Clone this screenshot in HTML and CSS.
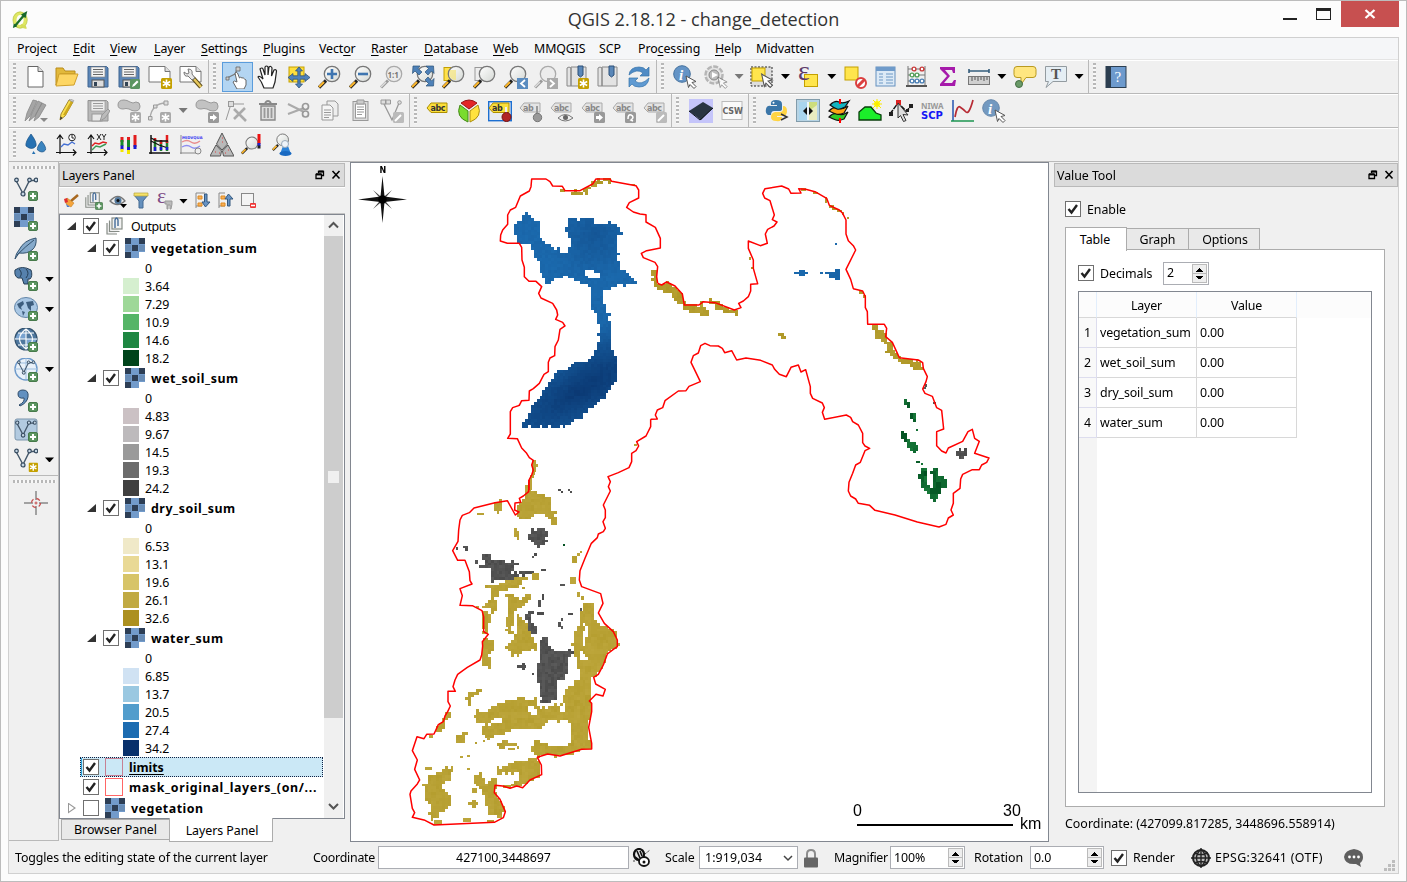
FILE: index.html
```
<!DOCTYPE html>
<html lang="en">
<head>
<meta charset="utf-8">
<title>QGIS 2.18.12 - change_detection</title>
<link rel="stylesheet" href="styles.css">
</head>
<body>
<svg class="sprite" width="0" height="0">
  <defs>
    <linearGradient id="lensG" x1="0" y1="0" x2="1" y2="1"><stop offset="0" stop-color="#fff"/><stop offset="1" stop-color="#d4d8d4"/></linearGradient>
  </defs>
  <symbol id="plus" viewBox="0 0 10 10"><rect x=".5" y=".5" width="9" height="9" rx="1.5" fill="#5b9560" stroke="#477a4b"/><path d="M5 2v6M2 5h6" stroke="#fff" stroke-width="2"/></symbol>
  <symbol id="star" viewBox="0 0 11 11"><rect width="11" height="11" rx="1.5" fill="#c4a000"/><path d="M5.5 1.5v8M1.8 3.5l7.4 4M9.2 3.5l-7.4 4" stroke="#fff" stroke-width="1.6"/></symbol>
  <symbol id="gstar" viewBox="0 0 11 11"><rect width="11" height="11" rx="1.5" fill="#aaa"/><path d="M5.5 1.5v8M1.8 3.5l7.4 4M9.2 3.5l-7.4 4" stroke="#fff" stroke-width="1.6"/></symbol>
  <symbol id="lens" viewBox="0 0 24 24"><path d="M1 22.500l7-7" stroke="#222" stroke-width="3.200"/><path d="M1 22l5-5" stroke="#fcb72c" stroke-width="2.200"/><circle cx="14" cy="9" r="7.700" fill="url(#lensG)" stroke="#777" stroke-width="1.300"/></symbol>
  <symbol id="glens" viewBox="0 0 24 24"><path d="M1 22.500l7-7" stroke="#999" stroke-width="3"/><path d="M1 22l5-5" stroke="#ddd" stroke-width="1.600"/><circle cx="14" cy="9" r="7.700" fill="#ececec" stroke="#aaa" stroke-width="1.300"/></symbol>
  <symbol id="cursor" viewBox="0 0 12 14"><path d="M1 1l10 5.500-4 1 4 4-2 2-4-4-1.500 3z" fill="#fff" stroke="#555" stroke-width="1"/></symbol>
  <symbol id="vee" viewBox="0 0 24 24"><path d="M2 3.500l7 13 6.500-13h6" fill="none" stroke="#43576a" stroke-width="1.400"/><g fill="#c5d6e4" stroke="#34495e" stroke-width="1.200"><circle cx="2.500" cy="3" r="1.800"/><circle cx="9" cy="17" r="2"/><circle cx="15.500" cy="3" r="1.800"/><circle cx="22" cy="3" r="1.800"/></g></symbol>
  <symbol id="raster" viewBox="0 0 20 20"><path fill="#729bcb" d="M0 0h20v14h-6v6H0z"/><path fill="#2d3e55" d="M0 0h6v6H0zM14 0h6v6h-6zM7 7h6v6H7zM0 14h6v6H0z"/><path fill="#56708f" d="M0 7h6v6H0zM14 7h6v6h-6z" opacity=".35"/></symbol>
  <symbol id="pencil" viewBox="0 0 24 24"><path d="M5 21l1-6L14 1l4 2-8 14z" fill="#fbe04d" stroke="#a48a2c"/><path d="M11 16l7-13-2-1-8 14z" fill="#cda91f"/><path d="M5 21l.6-3.500 2 1.500z" fill="#333"/><path d="M14 1l4 2 .8-1.500L15 0z" fill="#ddd" stroke="#888" stroke-width=".6"/></symbol>
  <symbol id="disk" viewBox="0 0 24 24"><path d="M2 1.500h18.500L22 3v19H2z" fill="#5b86b8" stroke="#3f6490"/><rect x="5" y="2" width="14" height="10" fill="#f4f4f4" stroke="#888" stroke-width=".7"/><path d="M7 4.500h10M7 7h10M7 9.500h10" stroke="#666"/><rect x="6" y="15" width="12" height="7" fill="#ddd" stroke="#555"/><rect x="8" y="17" width="3" height="4" fill="#345"/></symbol>
  <symbol id="gdisk" viewBox="0 0 24 24"><path d="M2 1.500h18.500L22 3v19H2z" fill="#b9b9b9" stroke="#929292"/><rect x="5" y="2" width="14" height="10" fill="#ededed" stroke="#999" stroke-width=".7"/><path d="M7 4.500h10M7 7h10M7 9.500h10" stroke="#999"/><rect x="6" y="15" width="10" height="7" fill="#e8e8e8" stroke="#999"/></symbol>
  <symbol id="gtag" viewBox="0 0 24 24"><path d="M1 9l4-5h16v9H5z" fill="#e4e4e4" stroke="#aaa"/></symbol>
  <symbol id="blob" viewBox="0 0 24 24"><path d="M1 6q0-5 6-5 3 0 6 2t6 0q4 0 4 4 0 5-5 5-3 0-6-2-3-1-6 0-5 0-5-4z" fill="#c2c2c2" stroke="#999"/></symbol>
  <symbol id="check" viewBox="0 0 16 16"><rect x=".5" y=".5" width="15" height="15" fill="#fff" stroke="#707070"/><path d="M3.500 8l3 3.500 5.500-7.500" fill="none" stroke="#222" stroke-width="2.400"/></symbol>
  <symbol id="uncheck" viewBox="0 0 16 16"><rect x=".5" y=".5" width="15" height="15" fill="#fff" stroke="#707070"/></symbol>
  <symbol id="folder3" viewBox="0 0 20 20"><g fill="#f2f2f2" stroke="#868c86" stroke-width="1.200"><path d="M2 7v11h10"/><path d="M4.500 4.500v11h10" /><rect x="7" y="2" width="10" height="11"/></g><path d="M10 12V4q1.500-4 3 0v6" fill="none" stroke="#456c99" stroke-width="1.400"/></symbol>
  <symbol id="dock" viewBox="0 0 26 10"><path d="M3.500 3V1.500h5v4H7M1 4.500h5.500v4H1z" fill="none" stroke="#000" stroke-width="1.300"/><path d="M1 4.300h5.500M3.500 1.500h5" stroke="#000" stroke-width="2"/><path d="M17.500 1l7 7.500M24.500 1l-7 7.500" stroke="#000" stroke-width="1.600"/></symbol>
  <symbol id="globe" viewBox="0 0 24 24"><circle cx="12" cy="11" r="11" fill="#4f789f" stroke="#34536f" stroke-width="1.200"/><path d="M4 5h8v6H1zM12 11h11l-4 6h-7z" fill="#79a3d0"/><path d="M4 5h16M1 11h22M4 17h16M12 1v20M12 1q-13 10 0 20 13-10 0-20" fill="none" stroke="#fff" stroke-width="1.100"/></symbol>
</svg>
<div class="window">
  <header class="titlebar">
    <svg class="logo" viewBox="0 0 20 22"><ellipse cx="9" cy="11" rx="6" ry="7.500" fill="none" stroke="#dfe763" stroke-width="4"/><ellipse cx="9" cy="11" rx="8" ry="9" fill="none" stroke="#a9b93b" stroke-width=".6"/><path d="M10 16q3 4 6 3" stroke="#d4dc5a" stroke-width="3" fill="none"/><path d="M3 18L14 5" stroke="#1d6d2a" stroke-width="2.500"/><path d="M10 5l7-4-2 8z" fill="#17672a"/><path d="M1 20l1-5 4 3z" fill="#17672a"/></svg>
    <h1 class="title">QGIS 2.18.12 - change_detection</h1>
    <div class="winbtns"><i class="min"></i><i class="max"></i><span class="close"><svg width="12" height="10" viewBox="0 0 12 10"><path d="M1.500 1l9 8M10.500 1l-9 8" stroke="#fff" stroke-width="2.300"/></svg></span></div>
  </header>
  <div class="frame">
    <nav class="menu"><span>Pro<u>j</u>ect</span><span><u>E</u>dit</span><span><u>V</u>iew</span><span><u>L</u>ayer</span><span><u>S</u>ettings</span><span><u>P</u>lugins</span><span>Vect<u>o</u>r</span><span><u>R</u>aster</span><span><u>D</u>atabase</span><span><u>W</u>eb</span><span>MMQGIS</span><span>SCP</span><span>Pro<u>c</u>essing</span><span><u>H</u>elp</span><span>Midvatten</span></nav>

    <div class="toolbar">
      <div class="group"><i class="grip"></i>
        <b><svg viewBox="0 0 24 24"><path d="M4 1.500h10l5 5V22H4z" fill="#fff" stroke="#666"/><path d="M14 1.500v5h5" fill="#ddd" stroke="#666"/></svg></b>
        <b><svg viewBox="0 0 24 24"><path d="M1 20V3h7l2 3h10v3H5z" fill="#e2b93b" stroke="#b98c1a"/><path d="M1 21l3-12h19l-4 11z" fill="#fdd664" stroke="#d0a02a"/></svg></b>
        <b><svg viewBox="0 0 24 24"><use href="#disk"/></svg></b>
        <b><svg viewBox="0 0 24 24"><use href="#disk"/><rect x="13" y="14" width="10" height="10" rx="1.500" fill="#5b9560"/><path d="M15 22l1-2.500 4-4 1.500 1.500-4 4z" fill="#fff"/></svg></b>
        <b><svg viewBox="0 0 24 24"><path d="M1 1.500h16l5 5V17H1z" fill="#fff" stroke="#777"/><path d="M17 1.500v5h5" fill="#ddd" stroke="#777"/><use href="#star" x="13" y="13" width="11" height="11"/></svg></b>
        <b><svg viewBox="0 0 24 24"><path d="M1 1.500h16l5 5V17H1z" fill="#fff" stroke="#777"/><path d="M17 1.500v5h5" fill="#ddd" stroke="#777"/><path d="M14 13l8 9" stroke="#5a4a18" stroke-width="4.500"/><path d="M15 14l7 8" stroke="#e7c85c" stroke-width="2.500"/><path d="M9 4q5 0 4 5l3 4-3 2-4-4q-4 1-4-4l3 2 2-1z" fill="#e8e8e8" stroke="#777"/></svg></b>
      </div>
      <div class="group"><i class="grip"></i>
        <b class="on"><svg viewBox="0 0 24 24"><path d="M2 13l8-4 3-7" fill="none" stroke="#777" stroke-width="1.200"/><path d="M8 17q1-2 4 0l-2-9q1-1.500 2.500 0l2 5q1-1.500 2.500 0 1-1 2.500 1l1.500 1v5l-2 4h-7z" fill="#fff" stroke="#666" stroke-width="1"/><path d="M11 2h4v4h-4zM1 12h3v3H1z" fill="#ccc" stroke="#666" stroke-width=".8"/></svg></b>
        <b><svg viewBox="0 0 24 24"><path d="M8 23q-2-6-6-11 1-2 5 2L4 4q2-2 3 0l2 6V2q1.500-2 3 0v8l1-8q2-1.500 3 1l-.5 8L18 5q2-1 2.500 1L19 17l-2 6z" fill="#fff" stroke="#222" stroke-width="1.200"/></svg></b>
        <b><svg viewBox="0 0 24 24"><rect x="2" y="2" width="15" height="15" fill="#ffdf3d" stroke="#c4a000"/><path d="M12 2l3.500 4H13.200v4.800H18V8.500l5 4-5 4v-2.300h-4.800V19h2.300L12 23l-3.500-4h2.300v-4.800H6v2.300l-5-4 5-4v2.300h4.800V6H8.500z" fill="#4f82bb" stroke="#264a70" stroke-width=".7"/></svg></b>
        <b><svg viewBox="0 0 24 24"><use href="#lens"/><path d="M14 4v10M9 9h10" stroke="#3e75b0" stroke-width="2.600"/></svg></b>
        <b><svg viewBox="0 0 24 24"><use href="#lens"/><path d="M9 9h10" stroke="#3e75b0" stroke-width="2.600"/></svg></b>
        <b><svg viewBox="0 0 24 24"><use href="#glens"/><text x="7.500" y="12.500" class="t8 bold" fill="#777">1:1</text></svg></b>
        <b><svg viewBox="0 0 24 24"><use href="#lens"/><path d="M2 1h7L7 3.500l4 3.500-3 3-4-4-2.500 2.500zM22.500 1H15l2.500 2.500-3.500 3.500 3 3 3.500-4 2.500 2.500zM22.500 21H15l2.500-2.500-3.500-3.500 3-3 3.500 4 2.500-2.500z" fill="#4d80b7" stroke="#2c5379" stroke-width=".7"/></svg></b>
        <b><svg viewBox="0 0 24 24"><rect x="2" y="2.500" width="12" height="13" fill="#ffe14a" stroke="#c4a000"/><use href="#lens"/><path d="M8 5h6v10q-6 0-7-6z" fill="#f5e477" opacity=".7"/></svg></b>
        <b><svg viewBox="0 0 24 24"><rect x="2" y="2.500" width="12" height="13" fill="#eee" stroke="#999"/><use href="#lens"/></svg></b>
        <b><svg viewBox="0 0 24 24"><use href="#lens"/><rect x="13" y="13" width="11" height="11" fill="#5a8cc0"/><path d="M21 15l-4 3.500 4 3.500" fill="none" stroke="#fff" stroke-width="1.800"/></svg></b>
        <b><svg viewBox="0 0 24 24"><use href="#glens"/><rect x="13" y="13" width="11" height="11" fill="#aaa"/><path d="M16 15l4 3.500-4 3.500" fill="none" stroke="#fff" stroke-width="1.800"/></svg></b>
        <b><svg viewBox="0 0 24 24"><path d="M2 3q2-2 4 0v18H2zM6 2h15v19H6z" fill="#e3e3e3" stroke="#888"/><path d="M13 1h5v9l-2.500 2L13 10z" fill="#5a87b8" stroke="#2d5079"/><use href="#star" x="13" y="13" width="11" height="11"/></svg></b>
        <b><svg viewBox="0 0 24 24"><path d="M2 3q2-2 4 0v18H2zM6 2h15v19H6z" fill="#e3e3e3" stroke="#888"/><path d="M13 1h5v9l-2.500 2L13 10z" fill="#5a87b8" stroke="#2d5079"/></svg></b>
        <b><svg viewBox="0 0 24 24"><path d="M2 10q1-8 10-8 5 0 7 3l3-3v9h-9l3-3q-6-5-14 2z" fill="#4f8bc5" stroke="#3572ab" stroke-width=".7"/><path d="M22 13q-1 9-10 9-5 0-7-3l-3 3v-9h9l-3 3q6 5 14-3z" fill="#5f9ad2" stroke="#3572ab" stroke-width=".7"/></svg></b>
      </div>
      <div class="group"><i class="grip"></i>
        <b><svg viewBox="0 0 24 24"><circle cx="9" cy="9" r="8.300" fill="#6494c6" stroke="#44719e"/><text x="6" y="14.500" class="serif" fill="#fff">i</text><use href="#cursor" x="12" y="10" width="12" height="14"/></svg></b>
        <b><svg viewBox="0 0 24 24"><circle cx="10" cy="10" r="8.500" fill="#e4e4e4" stroke="#b5b5b5" stroke-width="2.500" stroke-dasharray="5 1.500"/><circle cx="10" cy="10" r="5" fill="#bcbcbc" stroke="#888"/><path d="M8 7l6 3-6 3z" fill="#fff"/><g opacity=".6"><use href="#cursor" x="13" y="11" width="11" height="13"/></g></svg></b><em class="dim"></em>
        <b><svg viewBox="0 0 24 24"><rect x="1" y="2" width="21" height="19" fill="#ddd" stroke="#222" stroke-dasharray="2 1.500"/><rect x="2" y="3" width="13" height="13" fill="#ffe54d" stroke="#c4a000"/><use href="#cursor" x="10" y="8" width="14" height="15"/></svg></b><em></em>
        <b><svg viewBox="0 0 24 24"><rect x="7.500" y="9.500" width="13" height="12" fill="#ffe54d" stroke="#c4a000"/><text x="1" y="14.500" class="eps" fill="#5d3b6a">ε</text></svg></b><em></em>
        <b><svg viewBox="0 0 24 24"><rect x="2" y="2" width="13" height="13" fill="#ffe54d" stroke="#c4a000"/><circle cx="18" cy="18" r="5" fill="#fff" stroke="#db3f3f" stroke-width="2"/><path d="M14.500 21.500l7-7" stroke="#db3f3f" stroke-width="3"/></svg></b>
        <b><svg viewBox="0 0 24 24"><rect x="2" y="2" width="19" height="19" fill="#ddeaf6" stroke="#6490be"/><path d="M2 2h19v4H2z" fill="#6f9bca"/><path d="M5 9h4M12 9h7M5 12h4M12 12h7M5 15h4M12 15h7M5 18h4M12 18h7" stroke="#6d98c4"/></svg></b>
        <b><svg viewBox="0 0 24 24"><path d="M3 1v20M20 1v20M3 4h17M3 10h17M3 16h17" stroke="#777" fill="none"/><path d="M1 21h21" stroke="#555" stroke-width="2"/><g stroke-width="1.400" fill="#fff"><g stroke="#c93b3b"><circle cx="9" cy="4" r="1.900"/><circle cx="17" cy="4" r="1.900"/></g><g stroke="#55a05b"><circle cx="7" cy="10" r="1.900"/><circle cx="12" cy="10" r="1.900"/></g><g stroke="#4c80b5"><circle cx="7" cy="16" r="1.900"/><circle cx="12" cy="16" r="1.900"/><circle cx="17" cy="16" r="1.900"/></g></g></svg></b>
        <b><svg viewBox="0 0 24 24"><path d="M4 2h15v6h-2l-1-3H9l5 6-6 7h8l2-3h2l-1 6H4v-2l7-8-7-7z" fill="#a61bab"/></svg></b>
        <b><svg viewBox="0 0 24 24"><path d="M2 6h20M2 4v4M22 4v4" stroke="#355d7c" stroke-width="1.600"/><rect x="1.500" y="11.500" width="21" height="8" fill="#d0d0d0" stroke="#777"/><path d="M5 12v4M8 12v3M11 12v4M14 12v3M17 12v4M20 12v3" stroke="#555"/></svg></b><em></em>
        <b><svg viewBox="0 0 24 24"><path d="M4 1.500h16q3 0 3 3v5q0 3-3 3h-7l-5 7V12.500H4q-3 0-3-3v-5q0-3 3-3z" fill="#ffe680" stroke="#b99a20"/><circle cx="6" cy="19" r="3.500" fill="#6a9a68" stroke="#456f45"/></svg></b>
        <b><svg viewBox="0 0 24 24"><path d="M1.500 1.500h21v15H9l-7 6 2.500-6h-3z" fill="#e5eef4" stroke="#939ba0"/><text x="7" y="14" class="tt" fill="#555">T</text></svg></b><em></em>
      </div>
      <div class="group last"><i class="grip"></i>
        <b class="help"><svg viewBox="0 0 24 24"><rect x="2" y="1.500" width="20" height="21" fill="#6d9acd" stroke="#2c3e50"/><path d="M2 1h5v22H2z" fill="#2c3e50"/><text x="10.500" y="17" class="q" fill="#fff">?</text></svg></b>
      </div>
    </div>

    <div class="toolbar">
      <div class="group"><i class="grip"></i>
        <b><svg viewBox="0 0 24 24"><path d="M1 22l2-8L9 1l4 1-7 15zM5 22l3-8 6-12 4 2-7 13zM10 22l2-7 6-11 4 2-7 12z" fill="#a5a5a5" stroke="#888" stroke-width=".8"/><path d="M16 19h8l-4 4z" fill="#888"/></svg></b>
        <b><svg viewBox="0 0 24 24"><use href="#pencil"/></svg></b>
        <b><svg viewBox="0 0 24 24"><use href="#gdisk"/><path d="M14 22l2-6 6-6 2 2-5 7z" fill="#bbb" stroke="#999"/></svg></b>
        <b><svg viewBox="0 0 24 24"><use href="#blob"/><use href="#gstar" x="13" y="13" width="11" height="11"/></svg></b>
        <b><svg viewBox="0 0 24 24"><path d="M2 19Q4 4 18 4" fill="none" stroke="#aaa" stroke-width="1.300"/><path d="M.5 17.500h3.500V21H.500zM5.500 6H9v3H5.500zM16 2h4v4h-4z" fill="#ddd" stroke="#999"/><use href="#gstar" x="12" y="13" width="11" height="11"/></svg></b><em class="dim"></em>
        <b><svg viewBox="0 0 24 24"><use href="#blob"/><rect x="13" y="13" width="11" height="11" rx="1.500" fill="#999"/><path d="M15 17h3v-2l4 3.500-4 3.500v-2h-3z" fill="#fff"/></svg></b>
        <b><svg viewBox="0 0 24 24"><path d="M1 21L6 5h13" fill="none" stroke="#999"/><rect x="3.500" y="2.500" width="5" height="5" fill="#ddd" stroke="#999"/><path d="M9 10l12 12M20 9L9 20" stroke="#aaa" stroke-width="2.600"/></svg></b>
        <b><svg viewBox="0 0 24 24"><path d="M5 7h14v14H5z" fill="#ddd" stroke="#888" stroke-width="1.400"/><path d="M3 5h18M9 4q3-4 6 0" fill="none" stroke="#888" stroke-width="1.800"/><path d="M8.500 9v10M12 9v10M15.500 9v10" stroke="#999" stroke-width="1.800"/></svg></b>
        <b><svg viewBox="0 0 24 24"><path d="M1 5l16 8M1 15l16-6" stroke="#aaa" stroke-width="2"/><circle cx="18.500" cy="7.500" r="3" fill="none" stroke="#999" stroke-width="1.700"/><circle cx="18.500" cy="15" r="3" fill="none" stroke="#999" stroke-width="1.700"/></svg></b>
        <b><svg viewBox="0 0 24 24"><path d="M9 2h8l3 3v12H9z" fill="#eee" stroke="#999"/><path d="M4 6h8l3 3v12H4z" fill="#f6f6f6" stroke="#999"/><path d="M6 11h7M6 13.500h7M6 16h7M6 18.500h5" stroke="#999"/></svg></b>
        <b><svg viewBox="0 0 24 24"><rect x="4" y="2.500" width="15" height="19" fill="#ddd" stroke="#999"/><rect x="6.500" y="5" width="10" height="14" fill="#fff" stroke="#999"/><path d="M8 1h7v4H8z" fill="#ccc" stroke="#999"/><path d="M8 8h7M8 10.500h7M8 13h7M8 15.500h5" stroke="#999"/></svg></b>
        <b><svg viewBox="0 0 24 24"><path d="M1 1h5v4H1zM5.500 1h5v4h-5z" fill="#ddd" stroke="#999"/><path d="M4 5l8 16 7-17" fill="none" stroke="#999" stroke-width="1.300"/><circle cx="19.500" cy="3.500" r="1.800" fill="#ddd" stroke="#999"/><rect x="13" y="13" width="11" height="11" rx="1.500" fill="#bbb"/><path d="M15 22l6-6" stroke="#fff" stroke-width="2"/></svg></b>
      </div>
      <div class="group"><i class="grip"></i>
        <b><svg viewBox="0 0 24 24"><path d="M1 9l4-5h16v9.500H5z" fill="#fbdf3a" stroke="#ad8f00"/><text x="4.500" y="12" class="abc" fill="#333">abc</text></svg></b>
        <b><svg viewBox="0 0 24 24"><path d="M12 10L4 4q8-6 16 0z" fill="#e32626" stroke="#9a1515"/><path d="M11 12L3 6q-5 12 8 17z" fill="#79dc2e" stroke="#46891a"/><path d="M13 12l8-6q5 12-8 17z" fill="#ffe23d" stroke="#ab8e12"/></svg></b>
        <b><svg viewBox="0 0 24 24"><rect x=".7" y="2.700" width="22.600" height="19" fill="#e8eaf0" stroke="#1c6fd1" stroke-width="1.400"/><path d="M1 9l4-5h16v9.500H5z" fill="#fbdf3a" stroke="#ad8f00"/><text x="4" y="12" class="abc" fill="#333">ab</text><path d="M18 8v9" stroke="#eee" stroke-width="2"/><circle cx="18.500" cy="18" r="4.500" fill="#b12525" stroke="#771010"/></svg></b>
        <b><svg viewBox="0 0 24 24"><use href="#gtag"/><text x="4" y="12" class="abc" fill="#888">ab</text><path d="M18 7v9" stroke="#999" stroke-width="2"/><circle cx="18.500" cy="18.500" r="4.200" fill="#999" stroke="#777"/></svg></b>
        <b><svg viewBox="0 0 24 24"><use href="#gtag"/><text x="4" y="12" class="abc" fill="#888">abc</text><path d="M8 19q7-7 15 0-8 6-15 0z" fill="#eee" stroke="#777"/><circle cx="15.500" cy="18.500" r="2.500" fill="#666"/></svg></b>
        <b><svg viewBox="0 0 24 24"><use href="#gtag"/><text x="4" y="12" class="abc" fill="#888">abc</text><rect x="13" y="13" width="11" height="11" rx="1.500" fill="#999"/><path d="M15 17h3v-2l4 3.500-4 3.500v-2h-3z" fill="#fff"/></svg></b>
        <b><svg viewBox="0 0 24 24"><use href="#gtag"/><text x="4" y="12" class="abc" fill="#888">abc</text><rect x="13" y="13" width="11" height="11" rx="1.500" fill="#999"/><path d="M16 20q0-5 3-4 4 2 0 5l2 1" fill="none" stroke="#fff" stroke-width="1.500"/></svg></b>
        <b><svg viewBox="0 0 24 24"><use href="#gtag"/><text x="4" y="12" class="abc" fill="#888">abc</text><rect x="13" y="13" width="11" height="11" rx="1.500" fill="#bbb"/><path d="M15 22l6-6" stroke="#fff" stroke-width="2"/></svg></b>
      </div>
      <div class="group"><i class="grip"></i>
        <b><svg viewBox="0 0 24 24"><rect width="24" height="24" fill="#c5c5fa"/><path d="M0 12L14 3l10 6-12 12z" fill="#293541"/><path d="M0 12l11 9 13-12" fill="none" stroke="#10171d"/></svg></b>
        <b><svg viewBox="0 0 24 24"><rect x="2" y="2.500" width="20" height="18" fill="#fafafa" stroke="#bbb"/><text x="2.500" y="14.500" class="csw" fill="#666">CSW</text></svg></b>
      </div>
      <div class="group last"><i class="grip"></i>
        <b><svg viewBox="0 0 24 24"><path d="M11 1q6 0 6 4v5q0 2-3 2H9q-3 0-3 4H3q-3-2-2-6t5-3h6V6H6q-1-5 5-5z" fill="#3b76a8"/><path d="M18 7q4 0 4 5t-4 5h-6v1h5q0 5-6 4-5 0-5-4 0-4 4-5h5q3 0 3-3z" fill="#ffd443"/><circle cx="8.500" cy="3.800" r="1" fill="#fff"/><path d="M16 15l6 3-6 3" fill="none" stroke="#333" stroke-width="1.500"/></svg></b>
        <b><svg viewBox="0 0 24 24"><rect x=".5" y=".5" width="23" height="22" fill="#b7d4e5" stroke="#829cab"/><path d="M13 3h8v18h-8z" fill="#cddd7c"/><path d="M13 21V12l8-6v15z" fill="#e8ecc0"/><path d="M3 3h8v18H3z" fill="#a9d5ee"/><path d="M12 3v18" stroke="#fff" stroke-width="1.500"/><path d="M11 8v8l-4-4zM13 8v8l4-4z" fill="#111"/></svg></b>
        <b><svg viewBox="0 0 24 24"><g stroke="#111" stroke-width="1.200"><path d="M2 18q5-5 9-3t10-2l-4 7q-5 2-8 1t-7-3z" fill="#35c928"/><path d="M2 12q5-5 9-3t10-2l-4 7q-5 2-8 1t-7-3z" fill="#ffa514"/><path d="M3 6q5-5 9-3t10-1l-4 6q-5 3-8 2t-7-4z" fill="#14b4c0"/></g><path d="M13 0v5M13 19v5" stroke="#f00" stroke-width="2"/></svg></b>
        <b><svg viewBox="0 0 24 24"><path d="M1 21v-8l6-5h6l5 6 5 2v5z" fill="#1bef2a" stroke="#093c0b" stroke-width="1.300"/><circle cx="19" cy="5" r="3" fill="#ff0"/><path d="M19 0v10M14 5h10M15 1l8 8M23 1l-8 8" stroke="#fae900"/></svg></b>
        <b><svg viewBox="0 0 24 24"><path d="M1 15l8-11 8 8 6-5" fill="none" stroke="#111" stroke-width="1.500" stroke-dasharray="5 1"/><path d="M0 13h4v4H0zM17 10h3v3h-3zM20 5h4v4h-4z" fill="#222"/><path d="M7 1h5v5H7z" fill="#d22"/><path d="M9 4l10 12-5-.5 3 6-2.500 1-3-6L9 19z" fill="#ddd" stroke="#333"/></svg></b>
        <b><svg viewBox="0 0 24 24"><text x="1" y="9.500" class="niwa" fill="#999">NIWA</text><text x="1" y="19.500" class="scp" fill="#1515f5">SCP</text></svg></b>
        <b><svg viewBox="0 0 24 24"><path d="M2 1v21" stroke="#2654b0" stroke-width="1.500"/><path d="M0 22h23" stroke="#1d9651" stroke-width="1.500"/><path d="M4 18Q6 6 9 8t6 5 7-12" fill="none" stroke="#b72b34" stroke-width="1.700"/></svg></b>
        <b><svg viewBox="0 0 24 24"><circle cx="9" cy="9" r="8.300" fill="#7399c0" stroke="#6688ab"/><text x="6" y="14.500" class="serif" fill="#fff">i</text><use href="#cursor" x="12" y="10" width="12" height="14"/></svg></b>
      </div>
    </div>

    <div class="toolbar">
      <div class="group last"><i class="grip"></i>
        <b><svg viewBox="0 0 24 24"><path d="M7 1q6 8 5 12-4 5-10 0Q1 9 7 1z" fill="#2671b2" stroke="#1a5286" stroke-width=".7"/><path d="M17.500 8q5 6 4 9-3 4-8 0-1-3 4-9z" fill="#3b84bf" stroke="#1a5286" stroke-width=".7"/><path d="M8 21l1.500-3 2 3z" fill="#2671b2"/></svg></b>
        <b><svg viewBox="0 0 24 24"><path d="M5 2v19M1 19.500h20M2 6l3-4 3 4M18 16.500l3 3-3 3" fill="none" stroke="#111" stroke-width="1.200"/><path d="M6 14l3-3 4 1 4-3 3 2" fill="none" stroke="#4470d4" stroke-width="1.300"/><circle cx="17" cy="4.500" r="3.300" fill="#fff" stroke="#222"/><path d="M17 2v3h2" fill="none" stroke="#222"/></svg></b>
        <b><svg viewBox="0 0 24 24"><path d="M5 2v19M1 19.500h20M2 6l3-4 3 4M18 16.500l3 3-3 3" fill="none" stroke="#111" stroke-width="1.200"/><path d="M6 13l3-3 4 1 4-2 4 1" fill="none" stroke="#e02323" stroke-width="1.500"/><path d="M6 17l4-4 4 1 6-3" fill="none" stroke="#3c9b55" stroke-width="1.400"/><path d="M11 1l4 6M15 1l-4 6M16 1l2 3 2-3M18 4v3" stroke="#222" fill="none"/></svg></b>
        <b><svg viewBox="0 0 24 24"><path d="M5 4v5M11.500 4v5M18 2v12" stroke="#e21d1d" stroke-width="3"/><path d="M5 7v6M11.500 7v7" stroke="#168b2b" stroke-width="3"/><path d="M5 12.500v4M11.500 14v4M18 12v4" stroke="#1a1ad0" stroke-width="3"/><path d="M5 16v3M11.500 17v4" stroke="#f3e600" stroke-width="3"/></svg></b>
        <b><svg viewBox="0 0 24 24"><path d="M3 2v19M1 20h21" stroke="#111" stroke-width="1.500"/><path d="M7 6v12M13 8v10M19 8v10" stroke="#227f30" stroke-width="2.500"/><path d="M7 5v3M19 2v8M13 7v4" stroke="#e21d1d" stroke-width="2.500"/><path d="M3 5l6 3 11 0M3 8l8 4 9 3" fill="none" stroke="#111" stroke-width="1.300"/><path d="M7 14v4M13 14v3M19 14v3" stroke="#1a1ad0" stroke-width="2.500"/></svg></b>
        <b><svg viewBox="0 0 24 24"><path d="M2 2v19M1 20h16" stroke="#888"/><text x="3" y="5.500" class="mid" fill="#3838f0">MIDVQUAL</text><path d="M3 9q5-3 9 0t9-1" fill="none" stroke="#e98b8b" stroke-width="1.300"/><path d="M3 14q5-3 9 0t9-1" fill="none" stroke="#8d8df0" stroke-width="1.300"/><circle cx="19" cy="18" r="3" fill="#eee" stroke="#888"/></svg></b>
        <b><svg viewBox="0 0 24 24"><g fill="#b9b9b9" stroke="#555" stroke-width="1"><path d="M12 0L6.500 11l5.500 6 5.500-6z"/><path d="M6 12l5.500 6-1 5H0z"/><path d="M18 12l-5.500 6 1 5H24z"/></g><path d="M5 19h1M18 17h1M12 9h1M9 20h1M15 20h1M12 5h1" stroke="#d44"/></svg></b>
        <b><svg viewBox="0 0 24 24"><g transform="translate(0 3) scale(.78)"><use href="#lens" width="24" height="24"/></g><path d="M18 1v10" stroke="#e11" stroke-width="3"/><path d="M18 10v3" stroke="#22c" stroke-width="3"/><path d="M18 12.500v3" stroke="#222" stroke-width="3"/></svg></b>
        <b><svg viewBox="0 0 24 24"><path d="M8 21l3-8h5l3 8z" fill="#2b82d8"/><ellipse cx="13.500" cy="20.500" rx="6" ry="2.500" fill="#1a6ac2"/><g transform="translate(0 0) scale(.76)"><use href="#lens" width="24" height="24"/></g><circle cx="13" cy="11" r="3.500" fill="#eef4fa" stroke="#9ab"/></svg></b>
      </div>
    </div>

    <div class="work">
      <aside class="vtools">
        <i class="hgrip"></i>
        <div class="vt"><svg viewBox="0 0 24 24"><use href="#vee"/><use href="#plus" x="14" y="14" width="10" height="10"/></svg></div>
        <div class="vt"><svg viewBox="0 0 24 24"><use href="#raster" width="20" height="20"/><use href="#plus" x="14" y="14" width="10" height="10"/></svg></div>
        <div class="vt"><svg viewBox="0 0 24 24"><path d="M1 22q1-6 4-9Q10 3 22 1q1 8-4 12T5 16l-4 6z" fill="#86aacb" stroke="#34536f"/><path d="M3 18Q12 9 20 3" stroke="#34536f" fill="none"/><use href="#plus" x="14" y="14" width="10" height="10"/></svg></div>
        <div class="vt"><svg viewBox="0 0 24 24"><path d="M1 3q7-5 16 0 2 6-1 9h-2v5h-4l-2-6H4Q0 9 1 3z" fill="#5681ad" stroke="#263f57"/><path d="M5 2q4 4 1 8M12 2q4 4 0 9" fill="none" stroke="#263f57"/><use href="#plus" x="14" y="14" width="10" height="10"/></svg><em></em></div>
        <div class="vt"><svg viewBox="0 0 24 24"><ellipse cx="12" cy="10.500" rx="11.500" ry="10" fill="#a9c7e4" stroke="#6285a7"/><path d="M3 7l6-3 1 3-3 3 1 3-3-2zM12 5l7-1 1 4-3 1v5l-3-3zM8 14l3 1-2 4z" fill="#3e5e7e"/><use href="#plus" x="14" y="14" width="10" height="10"/></svg><em></em></div>
        <div class="vt"><svg viewBox="0 0 24 24"><use href="#globe"/><use href="#plus" x="14" y="14" width="10" height="10"/></svg></div>
        <div class="vt"><svg viewBox="0 0 24 24"><circle cx="12" cy="11" r="11" fill="#e9f1f9" stroke="#6e9aca" stroke-width="1.400"/><path d="M1 11h22M4 5h16M12 1v20" stroke="#9dbfe0"/><g transform="translate(3 2) scale(.75)"><use href="#vee" width="24" height="24"/></g><use href="#plus" x="14" y="14" width="10" height="10"/></svg><em></em></div>
        <div class="vt"><svg viewBox="0 0 24 24"><path d="M5 17q6-3 5-7-6 1-6-4 0-4 5-4 6 0 5 7-1 6-8 9z" fill="#6290c0" stroke="#2f4c6a"/><use href="#plus" x="14" y="14" width="10" height="10"/></svg></div>
        <div class="vt"><svg viewBox="0 0 24 24"><rect x="1" y="1" width="22" height="21" rx="2" fill="#b2cae0" stroke="#7b95ac"/><g transform="translate(1 2) scale(.9)"><use href="#vee" width="24" height="24"/></g><use href="#plus" x="14" y="14" width="10" height="10"/></svg></div>
        <div class="vt"><svg viewBox="0 0 24 24"><use href="#vee"/><use href="#star" x="14.500" y="14.500" width="9.500" height="9.500"/></svg><em></em></div>
        <i class="hgrip second"></i>
        <svg class="cross" viewBox="0 0 24 24"><path d="M0 12h9M15 12h9M12 0v9M12 15v9" stroke="#555"/><circle cx="12" cy="12" r="4.500" fill="none" stroke="#c54b4b" stroke-width="1.300" stroke-dasharray="4 3"/><path d="M10.500 12h3M12 10.500v3" stroke="#c54b4b"/></svg>
      </aside>

      <section class="layers">
        <div class="dockhead"><span>Layers Panel</span><svg viewBox="0 0 26 10"><use href="#dock"/></svg></div>
        <div class="ltools">
          <svg viewBox="0 0 20 20"><path d="M10 10l7-6" stroke="#a8681f" stroke-width="2.500"/><path d="M6 7l7 5-3 4-5-3z" fill="#f6a53c" stroke="#b87416" stroke-width=".5"/><path d="M3 8l3-1 1 4-3 1z" fill="#e03030"/><path d="M5 13l4 3-3 0z" fill="#4a78c8"/></svg>
          <svg viewBox="0 0 20 20"><use href="#folder3" width="18" height="18"/><use href="#plus" x="11" y="11" width="8" height="8"/></svg>
          <svg viewBox="0 0 20 20"><path d="M2 10q8-9 15 0-8 7-15 0z" fill="#eee" stroke="#777" stroke-width="1.300"/><circle cx="10" cy="9.500" r="3.500" fill="#54799c"/><circle cx="10" cy="9.500" r="1.500" fill="#111"/><path d="M12 13h7l-3.500 4z" fill="#000"/></svg>
          <svg viewBox="0 0 20 20"><path d="M3 4h14l-5 6v7H8v-7z" fill="#6590bd" stroke="#456a92"/><path d="M3 2h14v3H3z" fill="#f5e26a" stroke="#b8a33b" stroke-width=".7"/></svg>
          <svg viewBox="0 0 20 20"><text x="2" y="12" class="eps small" fill="#7d4c86">ε</text><path d="M10 10h7v3l-1 5h-1v-4h-2v4h-1v-5h-2z" fill="#bbb" stroke="#999"/></svg>
          <em></em>
          <svg viewBox="0 0 20 20"><path d="M3 2v15M3 2h9M3 15h6" stroke="#888" fill="none"/><path d="M5 5h4v3H5zM5 12h4v3H5z" fill="#f6b05a" stroke="#e08a1f"/><path d="M11.500 3h2.500v8h3l-4.500 5L9 11h2.500z" fill="#6793c4" stroke="#34597f"/></svg>
          <svg viewBox="0 0 20 20"><path d="M3 2v15M3 2h6M3 15h6" stroke="#888" fill="none"/><path d="M5 5h4v3H5zM5 12h4v3H5z" fill="#f6b05a" stroke="#e08a1f"/><path d="M11.500 15h2.500V8h3l-4.500-5L9 8h2.500z" fill="#6793c4" stroke="#34597f"/></svg>
          <svg viewBox="0 0 20 20"><rect x="1.500" y="2.500" width="12" height="12" fill="#f4f4f4" stroke="#888"/><rect x="10" y="12" width="6" height="5" rx="1" fill="#e33"/><path d="M11 14.500h4" stroke="#fff" stroke-width="1.500"/></svg>
        </div>
        <div class="treebox">
          <div class="tree">
            <div class="row root"><i class="open"></i><svg class="cb"><use href="#check"/></svg><svg class="ic"><use href="#folder3"/></svg><span class="plain">Outputs</span></div>
            <div class="row sub"><i class="open"></i><svg class="cb"><use href="#check"/></svg><svg class="ic"><use href="#raster"/></svg><span>vegetation_sum</span></div>
            <div class="leg"><i></i>0</div><div class="leg"><i class="g1"></i>3.64</div><div class="leg"><i class="g2"></i>7.29</div><div class="leg"><i class="g3"></i>10.9</div><div class="leg"><i class="g4"></i>14.6</div><div class="leg"><i class="g5"></i>18.2</div>
            <div class="row sub"><i class="open"></i><svg class="cb"><use href="#check"/></svg><svg class="ic"><use href="#raster"/></svg><span>wet_soil_sum</span></div>
            <div class="leg"><i></i>0</div><div class="leg"><i class="w1"></i>4.83</div><div class="leg"><i class="w2"></i>9.67</div><div class="leg"><i class="w3"></i>14.5</div><div class="leg"><i class="w4"></i>19.3</div><div class="leg"><i class="w5"></i>24.2</div>
            <div class="row sub"><i class="open"></i><svg class="cb"><use href="#check"/></svg><svg class="ic"><use href="#raster"/></svg><span>dry_soil_sum</span></div>
            <div class="leg"><i></i>0</div><div class="leg"><i class="d1"></i>6.53</div><div class="leg"><i class="d2"></i>13.1</div><div class="leg"><i class="d3"></i>19.6</div><div class="leg"><i class="d4"></i>26.1</div><div class="leg"><i class="d5"></i>32.6</div>
            <div class="row sub"><i class="open"></i><svg class="cb"><use href="#check"/></svg><svg class="ic"><use href="#raster"/></svg><span>water_sum</span></div>
            <div class="leg"><i></i>0</div><div class="leg"><i class="b1"></i>6.85</div><div class="leg"><i class="b2"></i>13.7</div><div class="leg"><i class="b3"></i>20.5</div><div class="leg"><i class="b4"></i>27.4</div><div class="leg"><i class="b5"></i>34.2</div>
            <div class="row vec sel"><svg class="cb"><use href="#check"/></svg><i class="outline"></i><span class="tight"><u>limits</u></span></div>
            <div class="row vec"><svg class="cb"><use href="#check"/></svg><i class="outline"></i><span>mask_original_layers_(on/...</span></div>
            <div class="row root veg"><i class="closed"></i><svg class="cb"><use href="#uncheck"/></svg><svg class="ic"><use href="#raster"/></svg><span>vegetation</span></div>
          </div>
          <div class="scroll"><svg viewBox="0 0 19 21"><path d="M5 12.500l4.500-4.500 4.500 4.500" fill="none" stroke="#555" stroke-width="2"/></svg><div class="thumb"><i></i></div><svg viewBox="0 0 19 21"><path d="M5 8l4.500 4.500L14 8" fill="none" stroke="#555" stroke-width="2"/></svg></div>
        </div>
        <div class="btabs"><span class="t1">Browser Panel</span><span class="t2">Layers Panel</span></div>
      </section>

      <main class="map">
        <canvas id="cells" width="697" height="678"></canvas>
        <svg class="over" viewBox="351 163 697 678" width="697" height="678">
          <g fill="none" stroke="#f00" stroke-linejoin="round">
            <path transform="translate(350 160) scale(.33333)" d="M870 162L888 164L888 186 916 202 931 235 931 264 890 272 874 280 880 293 915 307 923 320 920 350 923 370M870 162L850 156 830 142 838 128 866 114 866 90 858 77 785 64 780 57 738 57 728 72 690 92 645 92 637 79 608 78 600 65 588 57 545 57 543 80 538 93 511 108 497 142 481 150 473 165 473 193 458 210 452 225 451 243 472 250 508 250 515 262 516 300 523 322 523 350 537 364 558 364 575 380 566 400 573 414 608 430 620 450 623 465 617 478 638 487 645 498 630 508 625 540 615 560 614 587 600 594 595 607 595 635 582 643 568 670 550 686 538 693 537 721 515 722 508 736 488 743 481 755 481 822 473 835 502 836 515 864 530 880 538 893 550 901 545 915 550 930 545 945 537 960 537 990"/>
            <path transform="translate(400 450) scale(.33333)" d="M387 90L386 125 370 138 358 145 362 157 345 159 344 180 357 186 346 195 322 152 285 158 222 174 208 188 187 196 180 210 176 240 174 274 158 302 173 331 195 331 208 365 210 392 216 402 180 416 187 437 180 466 217 467 246 482 251 500 251 545 265 553 247 575 248 588 245 615 240 630 202 652 173 673 165 690 159 710 166 724 144 724 144 755 151 768 143 785 135 798 130 815 115 824 102 852 80 853 72 866 51 860 37 902 52 930 44 958 59 990 52 1002 33 1023 30 1033 37 1075 44 1088 37 1102 75 1111 102 1125 283 1117 310 1103 316 1085 300 1048 283 1028 285 1006 308 1008 330 1015 350 1008 368 1013 390 990 425 974 424 945 412 922 443 912 480 918 545 898 575 897 575 880 566 832 575 785 575 760 568 753 588 733 609 738 616 718 587 702 581 682 595 673 610 645 622 612 640 598 652 590 652 570 640 545 613 520 595 489 609 460 602 431 545 410 538 390 540 362 555 325 574 280 592 263 595 252 610 245 616 235 609 215 616 203 616 180 610 165 631 123 625 110 631 95 624 80 655 68 687 53 695 35 695 10 708 2 716 -12 710 -25 738 -42 752 -70 752 -92"/>
            <path transform="translate(640 160) scale(.33333)" d="M32 778L52 777 46 765 52 750 68 743 75 722 115 693 138 692 147 679 181 665 153 607 160 587 175 579 182 557 195 550 210 557 235 558 247 565 254 578 275 572 290 600 318 594 362 601 397 615 404 628 418 643 439 650 453 622 475 615 483 636 497 629 511 680 511 700 518 715 547 729 553 743 547 757 554 778 619 765 632 772 638 785 655 795 668 820 668 848 675 858 689 865 675 872 661 907 647 915 638 940 627 967 625 993 632 1008 647 1017 655 1030 689 1036 705 1051 765 1065 832 1086 897 1101 918 1093 925 1074 940 1065 933 1050 940 1030 940 1000 960 985 962 957 968 943 997 929 1018 929 1025 915 1040 907 1047 894 1004 880 1018 844 1004 835 997 808 984 815 968 844 925 864 918 879 905 873 890 857 890 815 911 807 905 751 890 743 877 709 855 700 848 687 858 665 862 650 850 625 848 608 835 600 778 593 757 547 737 530 740 505 733 493 683 493 682 455 676 443 676 410 668 393 640 386 632 358 618 328 647 270 640 257 625 242 618 222 618 180 608 160 598 150 568 136 560 115 525 95 497 88 476 86 483 99 453 100 446 87 425 78 375 86 368 100 374 114 390 122 403 165 397 179 411 186 402 198 383 208 376 222 382 250 361 257 325 243 325 265 340 300 340 325 353 371 332 373 332 393 325 410 310 423 296 430 303 443 283 450 225 428 190 425 177 435 133 435 127 402 105 378 80 366 65 375 53 370"/>
          </g>
          <path d="M382.500 176l2 20.500L407 199.500l-22.500 2.500L382.500 223l-2-21L358 199.500l22.500-3z" fill="#111"/>
          <path d="M373 190l9.500 8L392 190l-8 9.500 8 9.500-9.500-8-9.500 8 8-9.500z" fill="#444"/>
          <circle cx="382.500" cy="199.500" r="4.200" fill="#000"/>
          <text x="379.500" y="172.500" class="north">N</text>
          <path d="M857 824h156v2H857z" fill="#000"/>
          <text x="853" y="816" class="sb">0</text><text x="1003" y="816" class="sb">30</text><text x="1020" y="829" class="sb">km</text>
        </svg>
      </main>

      <section class="vtool">
        <div class="dockhead"><span>Value Tool</span><svg viewBox="0 0 26 10"><use href="#dock"/></svg></div>
        <div class="body">
          <label class="enable"><svg class="cb"><use href="#check"/></svg><span>Enable</span></label>
          <div class="tabs"><span class="cur">Table</span><span>Graph</span><span>Options</span></div>
          <div class="pane">
            <div class="dec"><svg class="cb"><use href="#check"/></svg><span>Decimals</span><div class="spin"><span>2</span><i class="ud"></i></div></div>
            <div class="tbl">
              <div class="tr th"><span></span><span>Layer</span><span>Value</span><span></span></div>
              <div class="tr"><span>1</span><span>vegetation_sum</span><span>0.00</span></div>
              <div class="tr"><span>2</span><span>wet_soil_sum</span><span>0.00</span></div>
              <div class="tr"><span>3</span><span>dry_soil_sum</span><span>0.00</span></div>
              <div class="tr"><span>4</span><span>water_sum</span><span>0.00</span></div>
              <div class="fill"></div>
            </div>
          </div>
          <div class="coord">Coordinate: (427099.817285, 3448696.558914)</div>
        </div>
      </section>
    </div>

    <footer class="status">
      <span class="msg">Toggles the editing state of the current layer</span>
      <span class="l1">Coordinate</span><div class="inp">427100,3448697</div>
      <svg class="mouse" viewBox="0 0 20 20"><ellipse cx="7" cy="6.500" rx="5" ry="5.500" fill="#e8e8e8" stroke="#111" stroke-width="2.200"/><path d="M5 3l3 7M8 3l2 5M3 9l8 6" stroke="#111" stroke-width="1.600"/><ellipse cx="12" cy="13.500" rx="5" ry="4.500" fill="#fff" stroke="#111" stroke-width="1.800"/><circle cx="12" cy="14" r="1.500" fill="#111"/><path d="M13 6l5-4M1 13l3 0" stroke="#444" stroke-dasharray="2 1"/></svg>
      <span class="l2">Scale</span><div class="combo"><span>1:919,034</span><svg width="10" height="8" viewBox="0 0 10 8"><path d="M1 2l4 4 4-4" fill="none" stroke="#444" stroke-width="1.500"/></svg></div>
      <svg class="lock" viewBox="0 0 16 20"><path d="M4 10V6q0-4 4-4t4 4v4" fill="none" stroke="#8c8c8c" stroke-width="2"/><rect x="1" y="9.500" width="14" height="10" rx="1" fill="#666"/></svg>
      <span class="l3">Magnifier</span><div class="spin s1"><span>100%</span><i class="ud"></i></div>
      <span class="l4">Rotation</span><div class="spin s2"><span>0.0</span><i class="ud"></i></div>
      <svg class="cb"><use href="#check"/></svg><span class="l5">Render</span>
      <svg class="crs" viewBox="0 0 20 20"><circle cx="10" cy="10" r="8" fill="#bbb" stroke="#222" stroke-width="2"/><path d="M10 0v20M0 10h20M10 1Q1 10 10 19M10 1q9 9 0 18M3 5q7 3 14 0M3 15q7-3 14 0" fill="none" stroke="#222" stroke-width="1.400"/></svg>
      <span class="l6">EPSG:32641 (OTF)</span>
      <svg class="bub" viewBox="0 0 22 20"><path d="M11 1q9 1 9 8 0 4-3 6l1 4-5-3q-11 1-12-7 1-7 10-8z" fill="#5f5f5f"/><circle cx="6.500" cy="9" r="1.400" fill="#fff"/><circle cx="11" cy="9" r="1.400" fill="#fff"/><circle cx="15.500" cy="9" r="1.400" fill="#fff"/></svg>
      <svg class="size" viewBox="0 0 11 11"><path d="M8 0h3v3H8zM4 4h3v3H4zM8 4h3v3H8zM0 8h3v3H0zM4 8h3v3H4zM8 8h3v3H8z" fill="#bdbdbd"/></svg>
    </footer>
  </div>
</div>
<script src="map.js"></script>
</body>
</html>
```
FILE: styles.css
```
* { box-sizing: border-box; }
body { margin: 0; font: 12.4px/16px "Noto Sans", "DejaVu Sans", sans-serif; letter-spacing: -.05px; color: #000; background: #fcfcfc; }
i, em, b { display: block; font-style: normal; font-weight: normal; }
u { text-underline-offset: 2px; }
span { white-space: nowrap; }
.sprite { position: absolute; }
.window { width: 1407px; height: 882px; border: 1px solid #bcbcbc; background: #fcfcfc; padding: 0 7px 7px; display: flex; flex-direction: column; overflow: hidden; }
.titlebar { height: 36px; display: flex; align-items: flex-start; flex: none; }
.logo { width: 18px; height: 22px; margin: 8px 0 0 4px; }
.title { flex: 1; margin: 5px 0 0 94px; text-align: center; font: 18.1px/27px "Open Sans", sans-serif; color: #333; letter-spacing: 0; }
.winbtns { display: flex; width: 116px; }
.min { width: 14px; height: 2px; background: #222; margin-top: 17px; }
.max { width: 15px; height: 12px; border: 1px solid #222; border-top-width: 3px; margin: 7px 10px 0 19px; }
.close { width: 58px; height: 26px; background: #c75050; display: flex; align-items: center; justify-content: center; }
.frame { flex: 1; border: 1px solid #d0d0d0; background: #f0f0f0; display: flex; flex-direction: column; min-height: 0; }
.menu { height: 22px; flex: none; background: #f5f6f8; border-bottom: 1px solid #e4e4e4; padding: 3px 0 0 8px; display: grid; grid-template-columns: 56px 37px 44px 47px 62px 56px 52px 53px 69px 41px 65px 39px 77px 41px auto; letter-spacing: -.1px; }
.toolbar { height: 34px; flex: none; display: flex; border-bottom: 1px solid #b9b9b9; background: #f0f0f0; box-shadow: inset 0 1px #fff; letter-spacing: 0; }
.group { display: flex; align-items: center; border-right: 1px solid #b9b9b9; padding-right: 1px; }
.group.last { border: 0; }
.grip { width: 3px; height: 27px; margin: 0 6px 0 4px; background: repeating-linear-gradient(#b8b8b8 0 2px, #f8f8f8 2px 4px); }
.group:first-child .grip { margin-right: 5px; }
.group b { width: 30.95px; height: 30px; display: flex; align-items: center; justify-content: center; }
.group b.help { width: 28px; }
.group b svg { width: 24px; height: 24px; margin-top: 1px; }
.group b.on { background: #b3d5f2; border: 1px solid #5a9cdc; }
em { width: 15.400px; height: 5px; flex: none; background: #000; clip-path: polygon(3px 0, 12px 0, 7.500px 5px); }
em.dim { background: #777; }
.group em { align-self: center; }
.t8 { font: bold 8px "Noto Sans", sans-serif; }
.abc { font: bold 8px "DejaVu Sans", sans-serif; letter-spacing: -.4px; }
.csw { font: bold 8px "DejaVu Sans", sans-serif; letter-spacing: -.2px; }
.niwa { font: bold 8px "Noto Sans", sans-serif; }
.scp { font: bold 10px "DejaVu Sans", sans-serif; }
.mid { font: bold 3.800px "DejaVu Sans", sans-serif; }
.serif { font: italic bold 15px "Liberation Serif", serif; }
.q { font: 15px "Liberation Serif", serif; }
.tt { font: bold 15px "Liberation Serif", serif; }
.eps { font: 28px "Liberation Serif", serif; }
.eps.small { font-size: 22px; }
.work { height: 681px; flex: none; display: flex; }
.vtools { width: 50px; height: 679px; border: solid #b9b9b9; border-width: 0 1px 1px 0; padding: 4px 0 0 4px; }
.hgrip { width: 43px; height: 3px; background: repeating-linear-gradient(90deg, #b8b8b8 0 2px, #f8f8f8 2px 4px); margin-bottom: 5px; }
.vt { height: 30.100px; display: flex; align-items: center; }
.vt svg { width: 24px; height: 24px; margin: 0 4px 0 1px; }
.hgrip.second { margin: 0 0 8px -4px; width: 49px; height: 8px; border-top: 1px solid #b9b9b9; background: repeating-linear-gradient(90deg, #b8b8b8 0 2px, #f8f8f8 2px 4px) 4px 4px / 43px 3px no-repeat; }
.cross { width: 24px; height: 24px; margin-left: 11px; }
.layers { width: 286px; height: 681px; padding-top: 1px; }
.dockhead { height: 24px; border: 1px solid #b9b9b9; background: #dbdbdb; display: flex; justify-content: space-between; align-items: center; padding: 1px 3px 0 2px; }
.dockhead svg { width: 26px; height: 10px; margin-top: -1px; }
.ltools { height: 27px; border-bottom: 1px solid #c4c4c4; border-top: 1px solid #fff; padding: 1px 0 0 2px; display: flex; align-items: center; letter-spacing: 0; }
.ltools svg { width: 20px; height: 20px; margin-right: 3.400px; }
.ltools em { margin: 0 2px 0 -2px; }
.ltools em + svg { margin-right: 3px; }
.treebox { height: 605px; border: 1px solid #828790; background: #fff; display: flex; }
.tree { width: 264px; flex: none; height: 603px; overflow: hidden; font: bold 12.4px/16px "Noto Sans", "DejaVu Sans", sans-serif; letter-spacing: .53px; }
.tree span { padding-top: 1px; }
.tree .tight { letter-spacing: 0; }
.row { height: 22px; display: flex; align-items: center; }
.cb { width: 16px; height: 16px; flex: none; }
.ic { width: 20px; height: 20px; flex: none; }
.root { padding-left: 7px; }
.root .cb { margin: 0 6px 0 7px; }
.root .ic { margin-right: 6px; }
.tree .plain { font: 12.4px/16px "Noto Sans", sans-serif; letter-spacing: -.4px; }
.sub { padding-left: 27px; }
.sub .cb { margin: 0 6px 0 7px; }
.sub .ic { margin-right: 6px; }
.open { width: 9px; height: 8px; background: #333; clip-path: polygon(100% 0, 100% 100%, 0 100%); }
.closed { width: 9px; height: 11px; background: #999; clip-path: polygon(1px 0, 100% 50%, 1px 100%, 1px 0, 2px 2px, 2px 9px, 7px 50%, 2px 2px); }
.leg { height: 18px; padding: 1px 0 0 63px; display: flex; align-items: center; font: 12.4px/16px "Noto Sans", sans-serif; letter-spacing: -.1px; }
.leg i { width: 16px; height: 16px; margin: -1px 6px 0 0; }
.g1 { background: #d5efcf; } .g2 { background: #9ed898; } .g3 { background: #55b567; } .g4 { background: #1e8742; } .g5 { background: #00441b; }
.w1 { background: #cbc1c4; } .w2 { background: #bdbabc; } .w3 { background: #9a9a9a; } .w4 { background: #6c6c6c; } .w5 { background: #404040; }
.d1 { background: #f0e9c8; } .d2 { background: #e9d995; } .d3 { background: #d7c468; } .d4 { background: #c1aa43; } .d5 { background: #ac9020; }
.b1 { background: #d0e2f3; } .b2 { background: #9ac8e1; } .b3 { background: #529dcc; } .b4 { background: #1c6cb1; } .b5 { background: #08306b; }
.vec { height: 20px; margin-left: 20px; width: 243px; padding-left: 3px; }
.vec .cb { margin-right: 6px; }
.vec span { letter-spacing: .67px; }
.outline { width: 18px; height: 18px; flex: none; border: 1px solid #f66; margin-right: 6px; }
.sel { background: #cbe8f6; border: 1px dotted #124; box-shadow: inset 1px 0 #26a0da; padding-left: 2px; }
.sel .outline { border-color: #c68094; }
.veg { height: 22px; }
.scroll { width: 19px; background: #f0f0f0; display: flex; flex-direction: column; }
.scroll svg { width: 19px; height: 21px; flex: none; }
.thumb { height: 482px; margin-bottom: 78px; background: #cdcdcd; display: flex; align-items: center; justify-content: center; }
.thumb i { width: 11px; height: 12px; background: #f0f0f0; }
.btabs { display: flex; padding-left: 2px; }
.t1 { width: 108px; height: 21px; border: 1px solid #acacac; border-right: 0; text-align: center; padding-top: 2px; background: #e9e9e9; }
.t2 { width: 104px; height: 24px; margin-top: -1px; border: 1px solid #acacac; border-top: 0; background: #fff; text-align: center; padding: 5px 0 0 2px; }
.map { width: 699px; height: 680px; margin-left: 5px; border: 1px solid #828790; background: #fff; display: grid; letter-spacing: 0; }
.map > * { grid-area: 1 / 1; display: block; }
.over g path { stroke-width: 1.500px; vector-effect: non-scaling-stroke; }
.sb { font: 16px "Liberation Sans", sans-serif; }
.north { font: bold 8px "DejaVu Sans", sans-serif; }
.vtool { width: 344px; margin-left: 5px; padding-top: 1px; }
.body { padding: 14px 13px 0 11px; }
.enable { display: flex; align-items: center; gap: 6px; height: 16px; }
.enable span { padding-top: 2px; }
.tabs { display: flex; align-items: flex-end; margin-top: 9px; height: 24px; }
.tabs span { height: 22px; border: 1px solid #acacac; border-left: 0; background: #e9e9e9; text-align: center; width: 71px; padding: 3px 0 0 2px; }
.tabs span:nth-child(2) { width: 62px; padding-left: 0; }
.tabs .cur { width: 62px; height: 24px; border-left: 1px solid #acacac; border-bottom: 0; background: #fff; margin-bottom: -1px; padding: 4px 2px 0 0; position: relative; }
.pane { height: 558px; border: 1px solid #acacac; background: #fff; padding: 12px 12px 0; margin-top: -1px; }
.dec { display: flex; align-items: center; height: 22px; }
.dec > span { margin-left: 6px; width: 63px; padding-top: 2px; }
.spin { height: 23px; background: #fff; border: 1px solid #abadb3; display: flex; justify-content: space-between; align-items: center; padding: 1px 1px 1px 3px; width: 46px; }
.ud { width: 15px; height: 19px; border: 1px solid #bbb; background: linear-gradient(#000, #000) 3px 6px / 7px 1px no-repeat, linear-gradient(#000, #000) 4px 5px / 5px 1px no-repeat, linear-gradient(#000, #000) 5px 4px / 3px 1px no-repeat, linear-gradient(#000, #000) 6px 3px / 1px 1px no-repeat, linear-gradient(#000, #000) 3px 11px / 7px 1px no-repeat, linear-gradient(#000, #000) 4px 12px / 5px 1px no-repeat, linear-gradient(#000, #000) 5px 13px / 3px 1px no-repeat, linear-gradient(#bbb, #bbb) 0 8px / 13px 1px no-repeat, #eee; }
.tbl { height: 502px; border: 1px solid #828790; margin-top: 7px; display: flex; flex-direction: column; }
.tr { height: 30px; flex: none; display: grid; grid-template-columns: 18px 100px 100px auto; }
.tr span { border: solid #d8d8d8; border-width: 0 1px 1px 0; padding: 7px 0 0 3px; letter-spacing: -.15px; }
.tr span:first-child { background: #f9f9f9; padding-left: 5px; border-color: #dde; }
.th { height: 26px; }
.tr.th span { text-align: center; padding: 6px 0 0; background: #fcfcfc; border-color: #e2eefc; border-bottom-color: #d8d8d8; }
.tr.th span:last-child { border: 0; }
.fill { flex: 1; width: 18px; background: #f4f4f4; }
.coord { margin-top: 9px; letter-spacing: .02px; }
.status { flex: 1; display: flex; align-items: center; padding: 0 0 1px 6px; }
.status > span { padding-top: 1px; flex: none; }
.msg { width: 298px; letter-spacing: -.12px; }
.l1 { width: 65px; letter-spacing: -.25px; } .l2 { width: 34px; } .l3 { width: 56px; letter-spacing: -.25px; } .l4 { width: 56px; } .l5 { width: 58px; margin-left: 6px; } .l6 { width: 128px; letter-spacing: .33px; }
.inp { width: 251px; height: 23px; border: 1px solid #abadb3; background: #fff; text-align: center; line-height: 22px; }
.mouse { width: 20px; height: 20px; margin: 0 13px 0 3px; }
.combo { width: 99px; height: 23px; border: 1px solid #abadb3; background: #fff; display: flex; justify-content: space-between; align-items: center; padding: 1px 4px 0 5px; letter-spacing: .1px; }
.lock { width: 16px; height: 20px; margin: 0 15px 0 5px; }
.s1 { width: 75px; margin-right: 9px; }
.s2 { width: 74px; margin-right: 7px; }
.crs { width: 20px; height: 20px; margin-right: 4px; }
.bub { width: 22px; height: 20px; }
.size { width: 11px; height: 11px; margin: 16px 0 0 19px; }
```
FILE: map.js
```
// Paints the classified raster cells (water, soil, vegetation) onto the map canvas.
const ctx = document.getElementById('cells').getContext('2d');
const CELL = 2.87;
const origins = { a: [350, 160], b: [640, 160], c: [400, 450], d: [400, 640] };
const hash = (i, j) => { const s = Math.sin(i * 127.1 + j * 311.7) * 43758.5453; return s - Math.floor(s); };
const shades = {
  W: (i, j, x, y) => {
    const d = Math.hypot((x - 577) * 0.8 + (y - 393) * 0.5, (y - 393) * 1.2 + (x - 577) * 0.3);
    const e = Math.hypot(x - 594, y - 236);
    const f = Math.hypot(x - 613, y - 365);
    const k = Math.max(0, 1 - d / 75) * 0.85 + Math.max(0, 1 - e / 45) * 0.3 + Math.max(0, 1 - f / 50) * 0.15 + hash(i, j) * 0.1;
    const m = Math.min(1, k);
    return `rgb(${27 - 18 * m},${106 - 54 * m},${174 - 64 * m})`;
  },
  D: (i, j, x, y) => {
    const k = hash(i >> 1, j >> 1) * 6 + hash(i, j) * 4 + (y < 400 ? 7 : 0);
    return `rgb(${190 - k},${167 - k},${61 - k * 1.5})`;
  },
  G: (i, j) => { const k = 74 + hash(i, j) * 16; return `rgb(${k},${k},${k})`; },
  V: (i, j) => { const k = hash(i >> 1, j >> 1); return `rgb(${24 - 22 * k},${122 - 42 * k},${58 - 25 * k})`; },
  X: () => '#fff',
};
const areas = [
  ['W', 'a', '535 157 548 175 563 182 570 205 568 228 590 245 610 262 640 275 660 278 657 262 660 235 648 205 655 180 672 173 690 180 710 172 730 172 732 186 760 190 785 188 805 200 822 222 803 232 803 300 815 325 835 345 862 370 862 376 840 375 800 378 780 385 755 395 755 428 768 430 768 458 782 460 778 480 787 510 785 550 793 580 803 598 803 665 785 675 765 710 735 735 700 765 655 797 520 800 517 783 530 775 545 740 570 705 595 685 600 658 630 632 655 628 680 608 715 600 730 580 745 560 748 500 738 465 722 440 728 410 722 385 705 372 680 360 640 350 610 358 605 375 590 372 575 345 570 310 555 290 550 270 535 252 505 245 490 215 498 185 520 172'],
  ['X', 'a', '703 328 728 328 750 345 745 362 728 358 705 348'],
  ['D', 'b', '38 330 50 330 52 370 75 367 105 378 127 402 133 435 180 435 182 422 190 422 190 440 204 458 195 470 165 462 135 450 125 433 105 420 85 398 60 395 42 375'],
  ['D', 'b', '190 422 228 422 255 440 292 450 290 463 260 458 232 448 220 430 195 428'],
  ['D', 'b', '414 522 428 522 440 528 440 536 425 535'],
  ['D', 'b', '697 497 715 492 715 508 735 515 740 540 757 552 775 590 835 600 850 628 840 632 815 622 790 612 765 595 745 575 735 550 710 535 705 515'],
  ['D', 'a', '618 86 645 95 690 95 720 78 725 64 740 57 780 58 795 67 750 68 738 75 722 80 720 100 690 104 662 103 660 96 632 98'],
  ['G', 'b', '952 867 975 865 977 873 983 878 975 893 962 895 952 888'],
  ['V', 'b', '788 722 800 715 812 740 805 748 798 738'],
  ['V', 'b', '808 760 827 760 827 783 815 783'],
  ['V', 'b', '786 818 798 818 805 835 820 845 832 862 825 882 815 868 800 850 788 832'],
  ['V', 'b', '835 935 848 922 862 922 860 935 850 940 860 945 858 965 870 985 880 980 878 942 870 940 880 915 890 930 900 945 912 955 925 973 905 995 890 1010 888 1027 870 1012 855 990 840 965'],
  ['D', 'c', '387 90 395 90 395 120 410 125 452 145 452 165 440 172 467 182 467 230 455 225 445 205 440 190 420 190 400 195 395 210 375 212 350 200 350 170 365 150 375 135'],
  ['D', 'c', '280 155 308 155 305 180 298 192 285 185 275 178'],
  ['D', 'c', '340 237 350 238 360 245 358 265 340 262'],
  ['D', 'c', '252 412 290 403 300 395 330 386 375 380 400 378 395 386 362 390 360 414 330 412 300 428 285 442 287 492 275 494 270 475 232 472 260 458 273 440 272 422'],
  ['D', 'c', '318 430 345 440 365 448 375 432 395 432 395 450 375 462 360 474 342 484 340 510 335 540 335 558 318 545 323 515 328 490 325 460'],
  ['D', 'c', '245 485 268 490 268 515 263 550 250 548'],
  ['D', 'c', '318 592 335 572 345 555 345 520 355 490 372 510 387 535 400 572 410 585 410 602 375 602 350 622 330 615'],
  ['D', 'd', '520 0 525 -25 540 -60 550 -105 580 -115 585 -60 605 -45 640 -30 653 -15 653 18 620 45 605 90 575 120 572 185 575 215 566 262 575 327 545 330 525 342 480 348 440 342 412 352 395 335 400 300 425 310 450 318 500 322 515 300 515 260 500 245 450 242 415 268 380 265 350 262 310 285 270 292 250 280 252 255 228 248 225 210 250 215 295 190 330 185 370 168 385 180 410 178 412 200 440 205 480 190 500 150 530 125 540 100 528 60 520 30'],
  ['X', 'd', '385 205 410 200 412 222 390 225'],
  ['X', 'd', '480 195 495 190 495 215 480 218'],
  ['X', 'd', '540 35 560 45 560 65 545 62'],
  ['X', 'd', '552 -50 562 -50 562 -10 552 20'],
  ['X', 'd', '258 248 300 232 318 238 300 248 270 252'],
  ['D', 'd', '395 350 412 352 424 375 424 404 400 415 385 430 355 440 335 440 340 425 360 420 360 400 310 400 290 410 288 385 320 380 350 365 380 360'],
  ['D', 'd', '290 312 320 302 340 310 362 320 360 330 340 320 325 322 300 322'],
  ['D', 'd', '68 430 85 428 85 410 120 400 142 380 162 382 155 400 145 420 130 425 125 440 150 470 145 500 120 525 100 545 90 540 85 490 78 480 80 455'],
  ['D', 'd', '225 405 240 402 250 415 265 430 275 412 290 425 285 455 300 480 316 505 310 533 290 530 265 520 270 510 260 500 250 485 255 465 240 445 225 430'],
  ['D', 'd', '250 0 280 0 282 30 270 40 272 80 255 78 245 60'],
  ['D', 'd', '195 175 210 155 235 150 250 145 250 155 225 165 205 180 215 200 200 190'],
  ['D', 'd', '135 215 150 218 140 245 120 275 110 275 115 255 130 245'],
  ['D', 'd', '165 290 180 285 195 272 208 275 195 290 195 308 170 308'],
  ['G', 'c', '388 250 400 238 420 235 430 232 445 248 440 275 425 290 412 295 405 280 390 270'],
  ['G', 'c', '246 312 270 310 275 330 310 335 340 330 365 345 340 355 330 370 380 362 405 370 330 385 275 392 272 365 285 355 240 350 260 345'],
  ['G', 'c', '375 490 400 485 395 505 410 545 395 555 385 525'],
  ['G', 'd', '418 -5 445 -10 450 20 470 35 515 30 520 42 502 60 507 100 490 120 470 130 472 170 450 190 425 190 418 150 412 100 418 40'],
];
const spots = [
  ['W', 'b', [[463, 337, 43, 7], [478, 330, 18, 18], [541, 337, 8, 6], [556, 337, 44, 6], [568, 343, 32, 12], [585, 328, 14, 33], [585, 250, 6, 7]]],
  ['D', 'b', [[483, 84, 14, 8], [518, 97, 14, 6], [556, 112, 7, 18], [568, 136, 15, 8], [577, 143, 14, 6], [592, 150, 14, 6], [606, 156, 6, 9], [621, 172, 6, 5], [328, 292, 6, 8], [334, 322, 6, 6], [658, 394, 12, 10], [668, 404, 8, 10], [735, 573, 7, 6]]],
  ['D', 'a', [[835, 72, 20, 4], [550, 900, 10, 30], [540, 945, 12, 8], [536, 955, 10, 35], [555, 912, 10, 8], [852, 852, 10, 6]]],
  ['G', 'b', [[850, 680, 10, 6], [856, 672, 6, 8], [880, 725, 10, 6]]],
  ['V', 'b', [[827, 808, 6, 6], [829, 902, 12, 6], [842, 910, 6, 5]]],
  ['V', 'c', [[488, 282, 6, 6]]],
  ['D', 'c', [[397, 30, 12, 35], [395, 65, 10, 10], [232, 188, 20, 6], [517, 318, 14, 20], [530, 308, 8, 8], [540, 303, 6, 6], [511, 382, 18, 20], [532, 425, 8, 14], [542, 438, 10, 12], [395, 370, 20, 22], [365, 410, 8, 6], [318, 500, 12, 30]]],
  ['D', 'd', [[310, 436, 25, 10], [75, 380, 20, 8], [103, 540, 25, 15], [190, 535, 25, 12], [215, 445, 15, 15], [205, 485, 30, 8], [215, 480, 12, 25], [260, 540, 20, 8], [88, 285, 12, 8], [225, 305, 6, 6], [250, 300, 6, 6], [180, 348, 8, 6], [200, 345, 10, 6], [262, 290, 8, 8], [202, 383, 8, 6], [325, 325, 20, 6], [250, -5, 15, 20]]],
  ['G', 'c', [[474, 118, 8, 6], [482, 124, 6, 6], [504, 118, 6, 6], [510, 124, 6, 6], [167, 290, 6, 8], [188, 288, 14, 6], [196, 294, 8, 10], [225, 330, 8, 12], [402, 310, 8, 8], [396, 317, 6, 6], [423, 358, 14, 6], [480, 403, 14, 6], [425, 432, 6, 18], [415, 450, 8, 20], [410, 485, 20, 8], [505, 490, 16, 6], [540, 475, 6, 10], [482, 505, 6, 10], [474, 515, 8, 14], [482, 528, 6, 10]]],
  ['G', 'd', [[352, 75, 28, 8], [365, 68, 10, 20], [397, 99, 6, 5]]],
];
for (const [kind, key, text] of areas) {
  const n = text.split(' ').map(Number);
  const [ox, oy] = origins[key];
  const path = new Path2D();
  let x0 = 1e4, y0 = 1e4, x1 = 0, y1 = 0;
  for (let k = 0; k < n.length; k += 2) {
    const x = ox + n[k] / 3, y = oy + n[k + 1] / 3;
    path.lineTo(x, y);
    x0 = Math.min(x0, x); x1 = Math.max(x1, x);
    y0 = Math.min(y0, y); y1 = Math.max(y1, y);
  }
  path.closePath();
  for (let j = Math.floor(y0 / CELL) - 1; j * CELL < y1 + CELL; j++) {
    for (let i = Math.floor(x0 / CELL) - 1; i * CELL < x1 + CELL; i++) {
      const cx = (i + 0.5) * CELL, cy = (j + 0.5) * CELL;
      const jx = (hash(i + 9, j) - 0.5) * 2, jy = (hash(i, j + 7) - 0.5) * 2;
      if (!ctx.isPointInPath(path, cx + jx, cy + jy)) continue;
      const l = Math.round(i * CELL), t = Math.round(j * CELL);
      ctx.fillStyle = shades[kind](i, j, cx, cy);
      ctx.fillRect(l - 351, t - 163, Math.round((i + 1) * CELL) - l, Math.round((j + 1) * CELL) - t);
    }
  }
}
for (const [kind, key, rects] of spots) {
  const [ox, oy] = origins[key];
  for (const [x, y, w, h] of rects) {
    const l = Math.round(ox + x / 3), t = Math.round(oy + y / 3);
    ctx.fillStyle = shades[kind](l, t, l, t);
    ctx.fillRect(l - 351, t - 163, Math.round(w / 3), Math.round(h / 3));
  }
}
```
